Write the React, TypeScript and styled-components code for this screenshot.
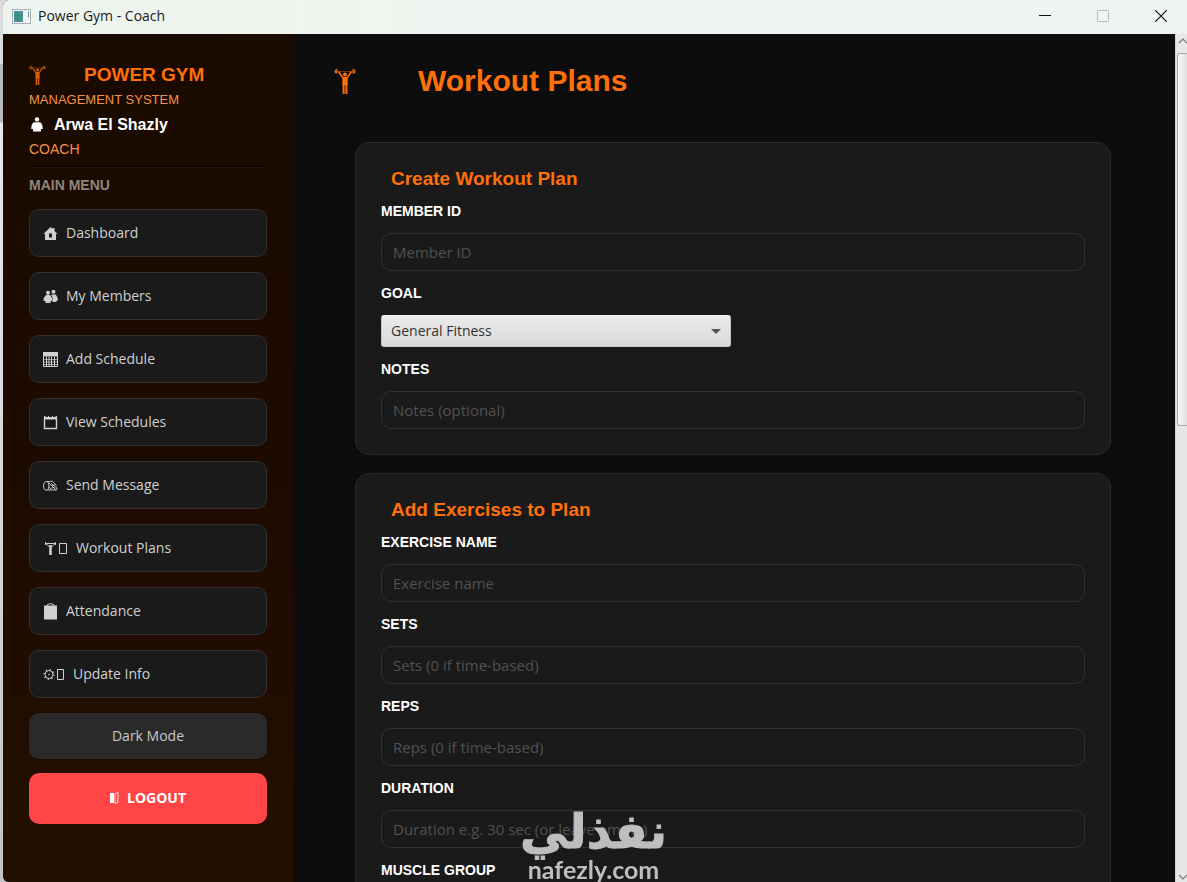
import React, { useId } from "react";
import styled, { createGlobalStyle, css } from "styled-components";

const arial = `"Liberation Sans", Arial, sans-serif`;
const segoe = `"Open Sans", "Segoe UI", sans-serif`;
const orange = "#ff6f0a";

const GlobalStyle = createGlobalStyle`
  *, *::before, *::after { box-sizing: border-box; }
  body { margin: 0; background: #d6d6d6; }
  h1, h2, p { margin: 0; }
  button, input, select { font: inherit; }
`;

const Desktop = styled.div`
  display: flex;
  height: 100vh;
  overflow: hidden;
  padding-left: 3px;
  background: linear-gradient(#dcdcdc 0 64px, #b8b8b8 64px 122px, #e9e9e9 123px, #c4c4c4);
`;

const AppWindow = styled.div`
  flex: 1;
  min-width: 0;
  display: flex;
  flex-direction: column;
  overflow: hidden;
  border-radius: 6px 0 0 6px;
  background: #0d0d0d;
`;

const TitleBar = styled.header`
  flex: none;
  height: 34px;
  display: flex;
  align-items: center;
  gap: 7px;
  padding: 0 8px 2px 9px;
  background: linear-gradient(90deg, #ecf4ef, #f0f6ee 25%, #eff4f1 40%);
  color: #1a1a1a;
  font: 14px/20px ${segoe};
`;

const WindowButtons = styled.div`
  margin-left: auto;
  display: flex;
  gap: 22px;
`;

const WindowButton = styled.button`
  width: 36px;
  height: 28px;
  display: grid;
  place-items: center;
  padding: 0;
  border: 0;
  background: none;
  color: #111;
  &:disabled { color: #b9bfbb; }
`;

const Body = styled.div`
  flex: 1;
  min-height: 0;
  display: flex;
`;

const Sidebar = styled.aside`
  flex: none;
  width: 290px;
  padding: 29px 26px;
  background: linear-gradient(#190a00, #1e0b00 50%, #241000);
  font-family: ${arial};
  overflow: hidden;
`;

const Brand = styled.div`
  display: flex;
  align-items: center;
  gap: 38px;
  height: 24px;
  color: ${orange};
  font-size: 19px;
  font-weight: bold;
  line-height: 24px;
  svg { opacity: 0.85; }
`;

const SideNote = styled.p<{ $size: number }>`
  color: #f2924a;
  font-size: ${(p) => p.$size}px;
  line-height: 25px;
`;

const UserName = styled.p`
  display: flex;
  align-items: center;
  gap: 10px;
  color: #fff;
  font-size: 16px;
  font-weight: bold;
  line-height: 25px;
`;

const Divider = styled.hr`
  margin: 4px 0 7px;
  border: 0;
  border-top: 1px solid #050302;
  border-bottom: 1px solid #2a1a0e;
`;

const MenuTitle = styled.h2`
  margin-bottom: 14px;
  color: #8f857d;
  font-size: 14px;
  line-height: 20px;
`;

const Nav = styled.nav`
  display: flex;
  flex-direction: column;
  gap: 15px;
`;

const sideButton = css`
  width: 100%;
  display: flex;
  align-items: center;
  border-radius: 10px;
  font: 14px/20px ${segoe};
`;

const NavButton = styled.button`
  ${sideButton}
  height: 48px;
  gap: 8px;
  padding: 0 13px;
  border: 1px solid #33302e;
  background: #1a1a1a;
  color: #d0d0d0;
`;

const ModeButton = styled.button`
  ${sideButton}
  justify-content: center;
  height: 46px;
  margin-top: 15px;
  border: 0;
  background: #2a2a2a;
  color: #c8c8c8;
`;

const LogoutButton = styled.button`
  ${sideButton}
  justify-content: center;
  gap: 8px;
  height: 51px;
  margin-top: 14px;
  padding: 0 6px 2px;
  border: 0;
  background: #ff4545;
  color: #fff;
  font-weight: 700;
`;

const Main = styled.main`
  flex: 1;
  min-width: 0;
  overflow: hidden;
  border-left: 1px solid #120b07;
  font-family: ${arial};
`;

const PageHeader = styled.div`
  display: flex;
  align-items: center;
  gap: 62px;
  padding: 29px 40px 43px;
  color: ${orange};
`;

const PageTitle = styled.h1`
  font-size: 30px;
  line-height: 36px;
`;

const Cards = styled.div`
  display: flex;
  flex-direction: column;
  gap: 18px;
  padding: 0 64px 40px 61px;
`;

const Card = styled.section`
  display: flex;
  flex-direction: column;
  gap: 12px;
  padding: 25px;
  border: 1px solid #2a2a2a;
  border-radius: 14px;
  background: #1a1a1a;
`;

const CardTitle = styled.h2`
  padding-left: 10px;
  color: ${orange};
  font-size: 19px;
  line-height: 21px;
`;

const FieldBox = styled.div`
  display: flex;
  flex-direction: column;
  gap: 12px;
`;

const FieldLabel = styled.label`
  color: #fff;
  font-size: 14px;
  font-weight: bold;
  line-height: 20px;
`;

const TextInput = styled.input`
  width: 100%;
  height: 38px;
  padding: 0 11px;
  border: 1px solid #303030;
  border-radius: 10px;
  background: #1a1a1a;
  color: #ddd;
  font: 15px/20px ${segoe};
  &::placeholder { color: #515151; opacity: 1; }
`;

const SelectWrap = styled.div`
  position: relative;
  width: 350px;
  max-width: 100%;
  svg {
    position: absolute;
    right: 10px;
    top: 14px;
    pointer-events: none;
  }
`;

const SelectInput = styled.select`
  display: block;
  width: 100%;
  height: 32px;
  padding: 0 9px;
  appearance: none;
  border: 1px solid #c2c2c2;
  border-top-color: #f4f4f4;
  border-radius: 3px;
  background: linear-gradient(#ececec, #d9d9d9);
  color: #333;
  font: 14px/20px ${segoe};
`;

const ScrollTrack = styled.div`
  flex: none;
  width: 12px;
  display: flex;
  flex-direction: column;
  align-items: flex-end;
  overflow: hidden;
  background: #e7e7e7;
  border-left: 1px solid #d4d4d4;
`;

const ScrollThumb = styled.div`
  flex: 0 0 44%;
  width: 10px;
  margin-bottom: auto;
  border: 1px solid #aaa;
  border-right: 0;
  border-radius: 3px 0 0 3px;
  background: linear-gradient(90deg, #fafafa, #dedede);
`;

const ScrollArrow = styled.svg`
  flex: none;
  margin: 4px 0 9px;
  &:last-child { margin: 9px 0 2px; }
`;

const Watermark = styled.div`
  position: fixed;
  left: 50%;
  bottom: 0;
  transform: translateX(-50%);
  display: flex;
  flex-direction: column;
  align-items: center;
  color: #bebebe;
  pointer-events: none;
`;

const WatermarkArabic = styled.span`
  font: bold 48px/50px "DejaVu Sans", sans-serif;
  -webkit-text-stroke: 1px #bebebe;
`;

const WatermarkLatin = styled.span`
  font: bold 25px/26px Lato, sans-serif;
`;

function Lifter({ size }: { size: number }) {
  return (
    <svg width={size} height={size * 1.2} viewBox="0 0 22 26.4" fill="none" stroke="currentColor" aria-hidden>
      <path d="M2 3.500h18" strokeWidth=".8" opacity=".5" />
      <path d="M1.300 1.800v3.400M2.800 .8v5M20.700 1.800v3.400M19.200 .8v5" strokeWidth="1.200" />
      <path d="M4.500 3.500l4.500 6.500M17.500 3.500l-4.500 6.500" strokeWidth="1.500" />
      <circle cx="11" cy="6.500" r="1.900" fill="currentColor" stroke="none" />
      <path d="M8.300 9h5.400v8H8.300z" fill="currentColor" stroke="none" />
      <path d="M9.600 16v10.400M12.400 16v10.400" strokeWidth="2" />
    </svg>
  );
}

function Person() {
  return (
    <svg width="15" height="16" viewBox="0 0 15 16" fill="currentColor" aria-hidden>
      <circle cx="8" cy="2.400" r="2.200" />
      <path d="M5 5.300h6q2.600 1.200 2.800 6.700H12v2.500H4V12H2.200Q2.400 6.500 5 5.300z" />
    </svg>
  );
}

const Home = () => (
  <svg width="15" height="15" viewBox="0 0 15 15" fill="currentColor" aria-hidden>
    <path fillRule="evenodd" d="M7.500 1l2 2V2h2v3L14.500 8H13v6H2V8H.5zM6 7.500v4h3v-4z" />
  </svg>
);

const People = () => (
  <svg width="15" height="15" viewBox="0 0 15 15" fill="currentColor" aria-hidden>
    <circle cx="5" cy="3.800" r="2" />
    <circle cx="10.500" cy="2.800" r="2" />
    <path d="M3 6h4l2 3v3H7.500v2h-5v-2H.5Q.5 8 3 6z" />
    <path d="M8 5.500h4.500Q14.500 7 15 11.500h-1.500v1.500h-4V8.500z" />
  </svg>
);

const CalendarGrid = () => (
  <svg width="15" height="15" viewBox="0 0 15 15" fill="none" stroke="currentColor" aria-hidden>
    <path d="M0 0h15v4.500H0z" fill="currentColor" stroke="none" />
    <path d="M.5 4v10.500h14V4M3.500 5v9M6 5v9M8.500 5v9M11.500 5v9" />
    <path d="M1 7.500h13M1 10h13M1 12.500h13" opacity=".7" />
  </svg>
);

const CalendarBlank = () => (
  <svg width="15" height="15" viewBox="0 0 15 15" fill="none" stroke="currentColor" aria-hidden>
    <path d="M1.500 3v10.500h12V3" strokeWidth="1.400" />
    <path d="M1 1h1.500v1H5V1h1v1h3V1h1v1h2.500V1H14v3.500H1z" fill="currentColor" stroke="none" />
  </svg>
);

const Mail = () => (
  <svg width="15" height="15" viewBox="0 0 15 15" fill="none" stroke="currentColor" strokeWidth=".9" aria-hidden>
    <path d="M6 3.500H2.500Q.5 5 .5 8t1.500 4h6.500" />
    <path d="M4 3.500Q6 4.500 6 8l-1 4M5 4l4-1 4.500 4.500M6 5l7 7H8.500L6 8.500M8 5.500l6 4.500-1 2.500M9 8l3-1M8.500 10l3-.5" />
  </svg>
);

const LifterSmall = () => (
  <svg width="25" height="15" viewBox="0 0 25 15" fill="none" stroke="currentColor" aria-hidden>
    <path d="M2 2.500h11M2.500 1v3M12.500 1v3" />
    <path d="M3.500 3l3 3M11.500 3l-3 3" />
    <path d="M6.200 4h2.600v10H6.200z" fill="currentColor" stroke="none" />
    <path d="M16.500 2.500h7v10h-7z" />
  </svg>
);

const Clipboard = () => (
  <svg width="15" height="17" viewBox="0 0 15 17" fill="currentColor" aria-hidden>
    <path d="M1 2.500h13V16.500H1z" />
    <path d="M4.500 3V1.500q3-1.800 6 0V3" fill="none" stroke="currentColor" />
  </svg>
);

const Gear = () => (
  <svg width="22" height="15" viewBox="0 0 22 15" fill="none" stroke="currentColor" aria-hidden>
    <circle cx="6" cy="7.500" r="4" />
    <circle cx="6" cy="7.500" r="4.900" strokeDasharray="1.200 2.650" strokeWidth="1.300" />
    <circle cx="6" cy="7.500" r=".8" fill="currentColor" stroke="none" />
    <path d="M14.500 2.500h6v10h-6z" />
  </svg>
);

const Door = () => (
  <svg width="9" height="14" viewBox="0 0 9 14" fill="currentColor" aria-hidden>
    <path d="M0 2h4v10H0z" />
    <path d="M5 2.500L8 1.500v10L5 12.500z" fill="none" stroke="currentColor" strokeWidth=".8" />
  </svg>
);

const AppIcon = () => (
  <svg width="19" height="15" viewBox="0 0 19 15" aria-hidden>
    <rect x=".5" y=".5" width="18" height="14" fill="#f3f5f6" stroke="#a9b0b3" />
    <rect x="2" y="2" width="9" height="11" fill="#4f8f9c" />
    <rect x="3" y="4" width="6" height="8" fill="#3d9181" />
    <path d="M16.500 2.500v6" stroke="#5ba08f" />
  </svg>
);

const navItems: [string, () => React.ReactElement][] = [
  ["Dashboard", Home],
  ["My Members", People],
  ["Add Schedule", CalendarGrid],
  ["View Schedules", CalendarBlank],
  ["Send Message", Mail],
  ["Workout Plans", LifterSmall],
  ["Attendance", Clipboard],
  ["Update Info", Gear],
];

function TextField({ label, placeholder }: { label: string; placeholder: string }) {
  const id = useId();
  return (
    <FieldBox>
      <FieldLabel htmlFor={id}>{label}</FieldLabel>
      <TextInput id={id} placeholder={placeholder} />
    </FieldBox>
  );
}

function SelectField({ label, options }: { label: string; options: string[] }) {
  const id = useId();
  return (
    <FieldBox>
      <FieldLabel htmlFor={id}>{label}</FieldLabel>
      <SelectWrap>
        <SelectInput id={id}>
          {options.map((o) => (
            <option key={o}>{o}</option>
          ))}
        </SelectInput>
        <svg width="10" height="5" viewBox="0 0 10 5" aria-hidden>
          <path d="M0 0h10L5 5z" fill="#555" />
        </svg>
      </SelectWrap>
    </FieldBox>
  );
}

export default function App() {
  return (
    <>
      <GlobalStyle />
      <Desktop>
        <AppWindow>
          <TitleBar>
            <AppIcon />
            <span>Power Gym - Coach</span>
            <WindowButtons>
              <WindowButton aria-label="Minimize">
                <svg width="12" height="12" viewBox="0 0 12 12" stroke="currentColor">
                  <path d="M0 5.500h12" />
                </svg>
              </WindowButton>
              <WindowButton aria-label="Maximize" disabled>
                <svg width="12" height="12" viewBox="0 0 12 12" fill="none" stroke="currentColor">
                  <rect x=".5" y=".5" width="11" height="11" rx="1" />
                </svg>
              </WindowButton>
              <WindowButton aria-label="Close">
                <svg width="12" height="12" viewBox="0 0 12 12" stroke="currentColor" strokeWidth="1.200">
                  <path d="M0 0l12 12M12 0L0 12" />
                </svg>
              </WindowButton>
            </WindowButtons>
          </TitleBar>
          <Body>
            <Sidebar>
              <Brand>
                <Lifter size={17} />
                POWER GYM
              </Brand>
              <SideNote $size={13}>MANAGEMENT SYSTEM</SideNote>
              <UserName>
                <Person />
                Arwa El Shazly
              </UserName>
              <SideNote $size={14}>COACH</SideNote>
              <Divider />
              <MenuTitle>MAIN MENU</MenuTitle>
              <Nav>
                {navItems.map(([name, Icon]) => (
                  <NavButton key={name}>
                    <Icon />
                    {name}
                  </NavButton>
                ))}
              </Nav>
              <ModeButton>Dark Mode</ModeButton>
              <LogoutButton>
                <Door />
                LOGOUT
              </LogoutButton>
            </Sidebar>
            <Main>
              <PageHeader>
                <Lifter size={22} />
                <PageTitle>Workout Plans</PageTitle>
              </PageHeader>
              <Cards>
                <Card>
                  <CardTitle>Create Workout Plan</CardTitle>
                  <TextField label="MEMBER ID" placeholder="Member ID" />
                  <SelectField label="GOAL" options={["General Fitness"]} />
                  <TextField label="NOTES" placeholder="Notes (optional)" />
                </Card>
                <Card>
                  <CardTitle>Add Exercises to Plan</CardTitle>
                  <TextField label="EXERCISE NAME" placeholder="Exercise name" />
                  <TextField label="SETS" placeholder="Sets (0 if time-based)" />
                  <TextField label="REPS" placeholder="Reps (0 if time-based)" />
                  <TextField label="DURATION" placeholder="Duration e.g. 30 sec (or leave empty)" />
                  <TextField label="MUSCLE GROUP" placeholder="" />
                </Card>
              </Cards>
            </Main>
            <ScrollTrack aria-hidden>
              <ScrollArrow width="9" height="6" viewBox="0 0 9 6" fill="none" stroke="#777" strokeWidth="1.200">
                <path d="M1 5l4-4 4 4" />
              </ScrollArrow>
              <ScrollThumb />
              <ScrollArrow width="9" height="6" viewBox="0 0 9 6" fill="none" stroke="#777" strokeWidth="1.200">
                <path d="M1 1l4 4 4-4" />
              </ScrollArrow>
            </ScrollTrack>
          </Body>
        </AppWindow>
      </Desktop>
      <Watermark>
        <WatermarkArabic lang="ar" dir="rtl">نفذلي</WatermarkArabic>
        <WatermarkLatin>nafezly.com</WatermarkLatin>
      </Watermark>
    </>
  );
}
